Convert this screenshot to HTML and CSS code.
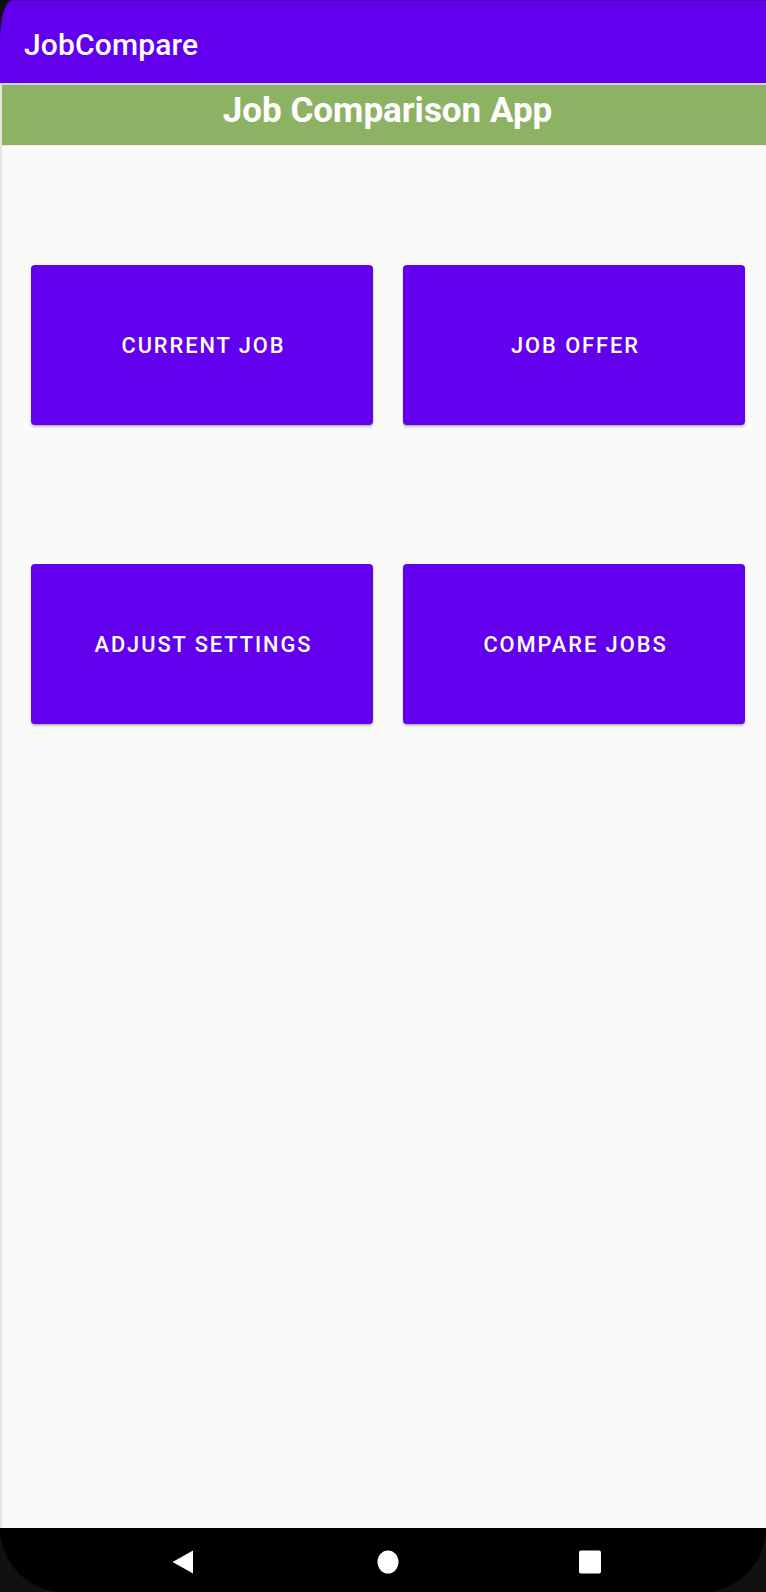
FILE: index.html
```html
<!DOCTYPE html>
<html>
<head>
<meta charset="utf-8">
<title>JobCompare</title>
<link rel="stylesheet" href="styles.css">
</head>
<body>
<div class="screen">
  <header class="appbar">
    <span class="appbar-title">JobCompare</span>
  </header>
  <main class="content">
    <div class="banner">Job Comparison App</div>
    <div class="grid">
      <button class="btn">CURRENT JOB</button>
      <button class="btn">JOB OFFER</button>
      <button class="btn">ADJUST SETTINGS</button>
      <button class="btn">COMPARE JOBS</button>
    </div>
  </main>
  <nav class="navbar">
    <svg class="nav-icon" width="22" height="24" viewBox="0 0 22 24"><path d="M21 0.5 L21 23.5 L0.5 12 Z" fill="#fff"/></svg>
    <svg class="nav-icon nav-home" width="22" height="24" viewBox="0 0 22 24"><ellipse cx="11" cy="12" rx="10.5" ry="11.5" fill="#fff"/></svg>
    <svg class="nav-icon" width="22" height="24" viewBox="0 0 22 24"><rect x="0" y="0.5" width="22" height="23" rx="2" fill="#fff"/></svg>
  </nav>
</div>
</body>
</html>
```
FILE: styles.css
```css
html, body {
  margin: 0;
  padding: 0;
  background: #131110;
}

.screen {
  width: 766px;
  height: 1592px;
  display: flex;
  flex-direction: column;
  background: #131110;
  font-family: Roboto, "Liberation Sans", sans-serif;
  overflow: hidden;
}

.appbar {
  height: 82px;
  flex: none;
  background: #6200ee;
  border-top: 1px solid #4a00c0;
  border-bottom: 2px solid #d4d0dc;
  border-top-left-radius: 12px 40px;
  display: flex;
  align-items: center;
  padding-left: 24px;
  box-sizing: content-box;
}

.appbar-title {
  color: #fff;
  font-size: 30px;
  font-weight: 500;
  letter-spacing: 0.005em;
  margin-top: 4px;
}

.content {
  flex: 1;
  background: #fafaf8;
  border-left: 2px solid #e4e4e2;
}

.banner {
  height: 60px;
  background: #8db263;
  border-bottom: 1px solid #eaeae6;
  color: #fff;
  font-size: 35px;
  font-weight: 700;
  text-align: center;
  line-height: 52px;
  padding-left: 7px;
}

.grid {
  display: grid;
  grid-template-columns: 342px 342px;
  grid-auto-rows: 160px;
  column-gap: 30px;
  row-gap: 139px;
  padding-left: 29px;
  margin-top: 119px;
}

.btn {
  border: none;
  border-radius: 4px;
  background: #6200ee;
  color: #fff;
  font-family: Roboto, "Liberation Sans", sans-serif;
  font-size: 21.8px;
  font-weight: 500;
  letter-spacing: 0.09em;
  box-shadow: 0 2px 3px rgba(0, 0, 0, 0.22), 0 1px 1px rgba(0, 0, 0, 0.12);
  padding: 0 0 0 3px;
  cursor: pointer;
}

.navbar {
  height: 64px;
  flex: none;
  background: #000;
  border-radius: 0 0 64px 64px / 0 0 64px 64px;
  display: flex;
  align-items: center;
  padding-left: 172px;
}

.nav-icon {
  display: block;
  margin-top: 4px;
}

.nav-home {
  margin: 4px 180px 0 183px;
}
```
